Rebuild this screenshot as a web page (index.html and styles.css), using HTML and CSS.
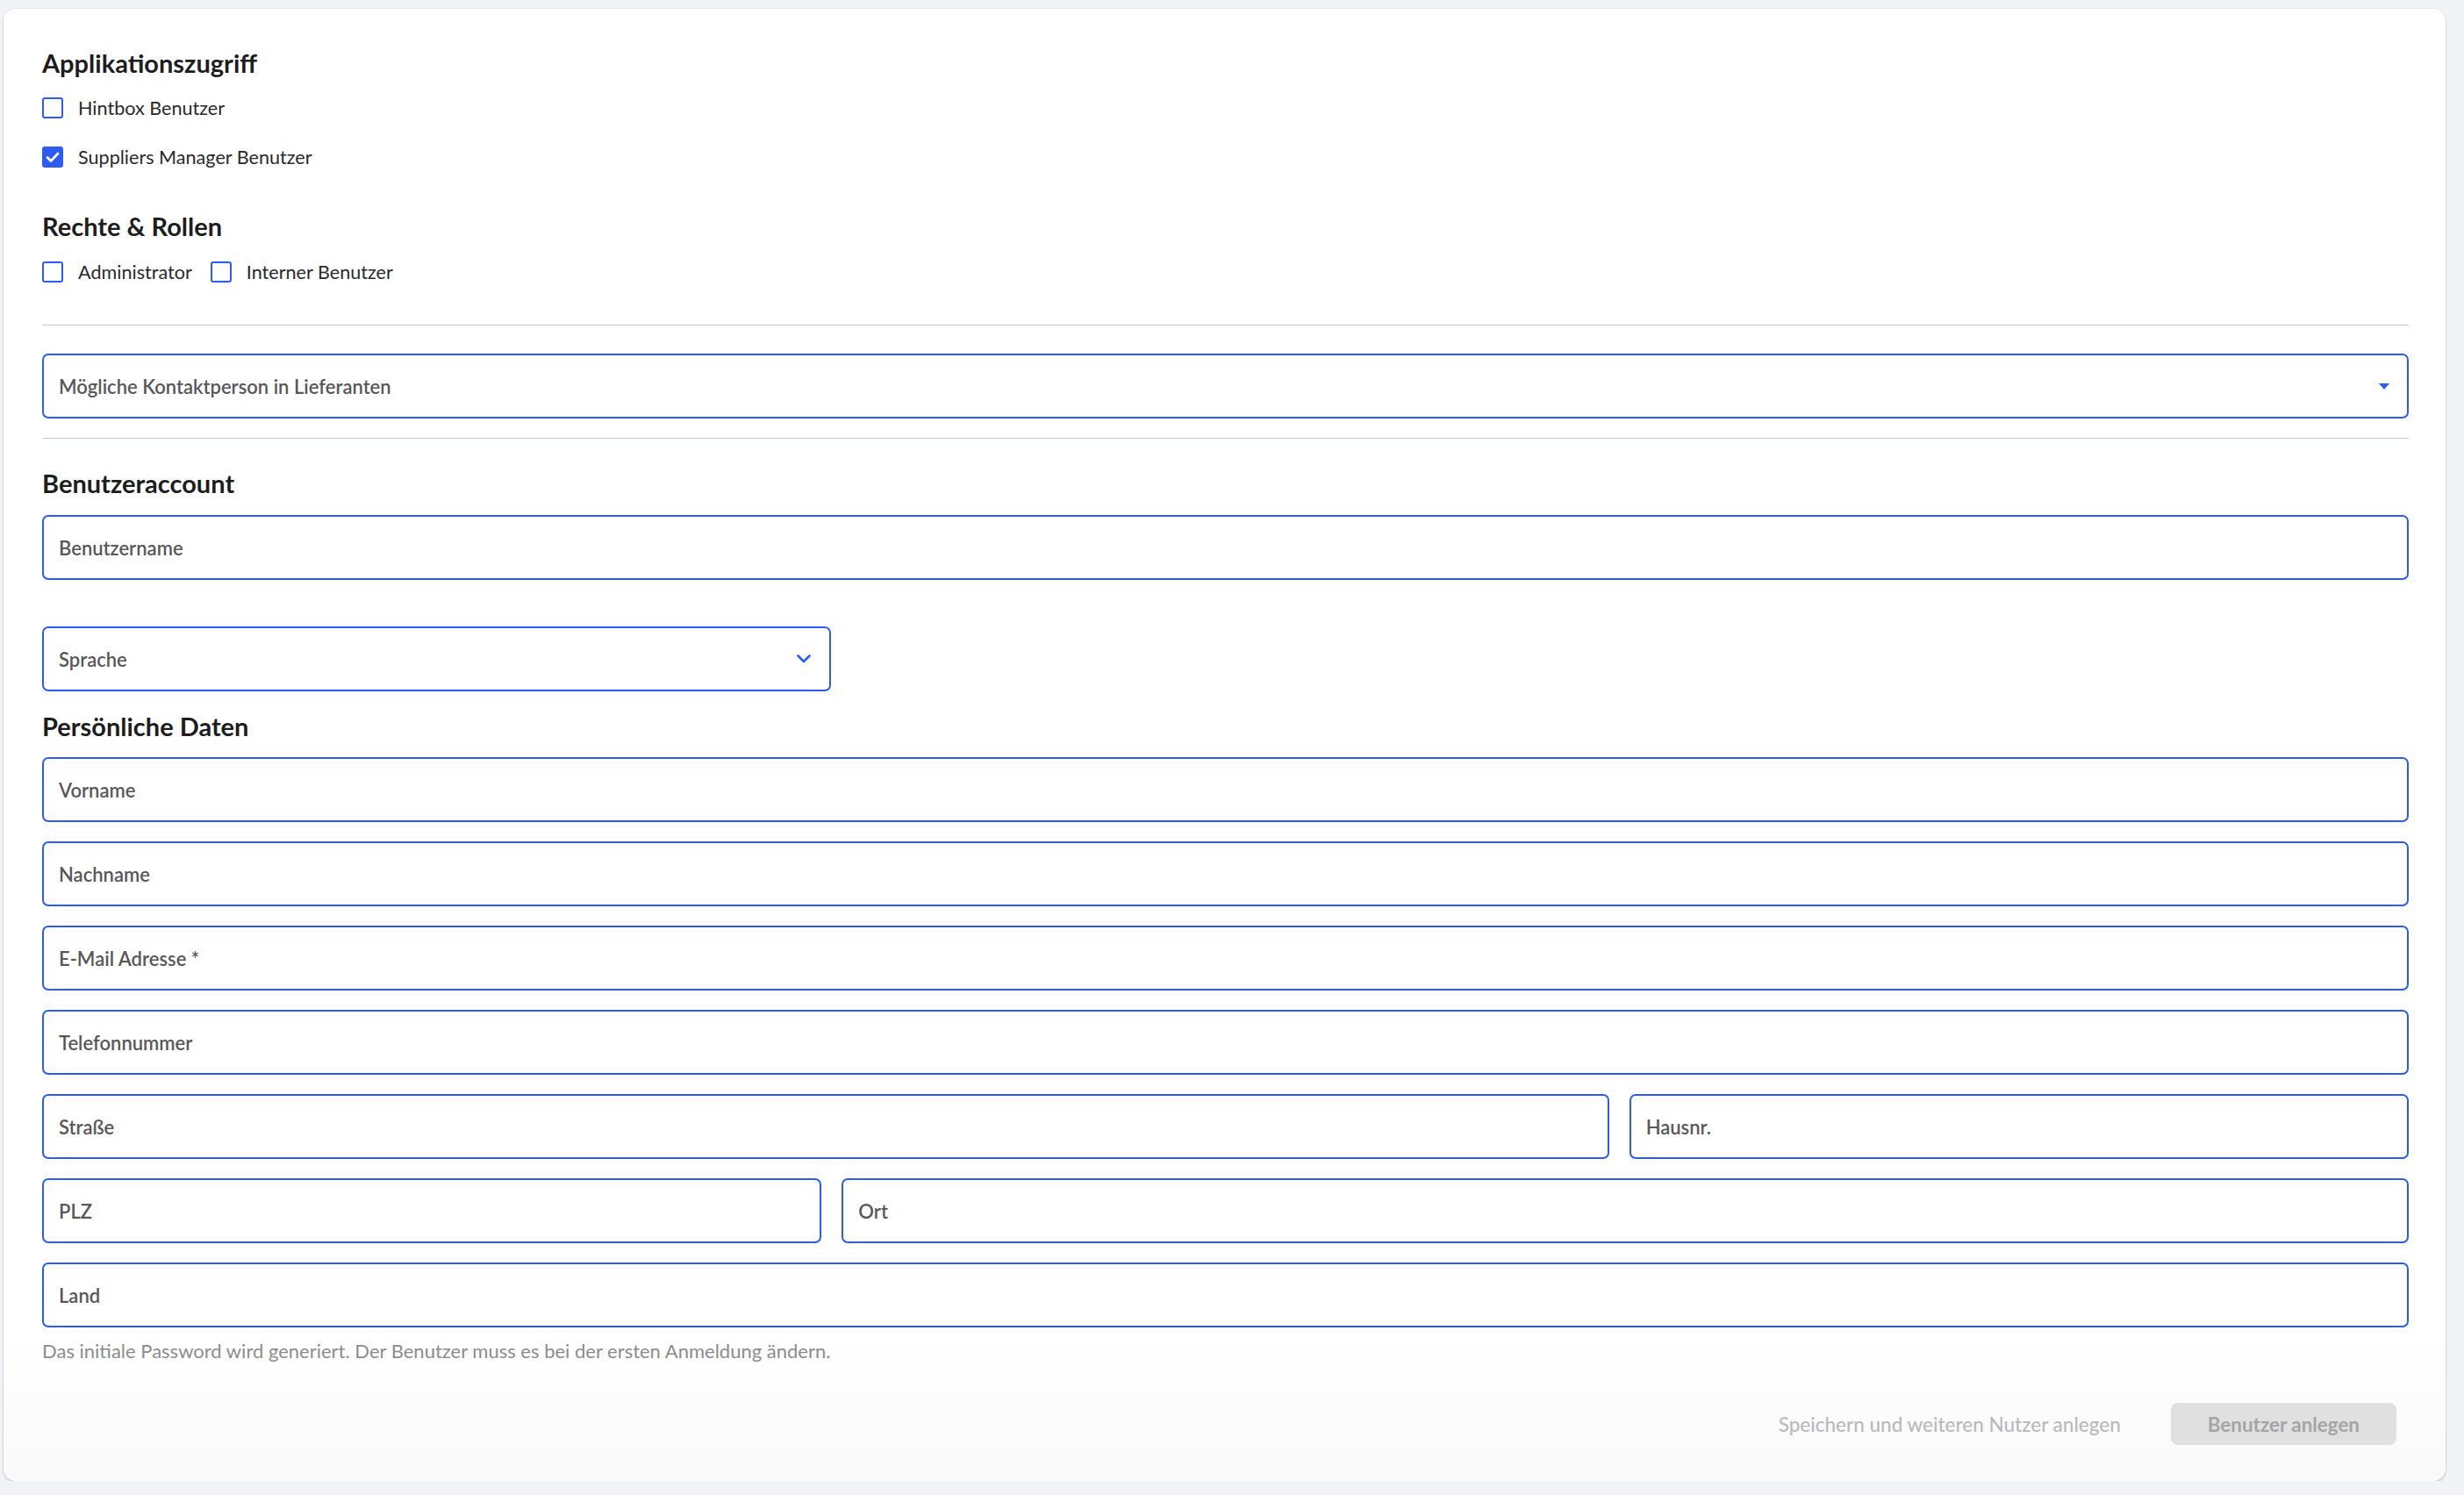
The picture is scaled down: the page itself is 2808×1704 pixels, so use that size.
FILE: index.html
```html
<!DOCTYPE html>
<html lang="de">
<head>
    <meta charset="UTF-8">
    <meta name="viewport" content="width=device-width, initial-scale=1.0">
    <title>Benutzer anlegen</title>
    <link rel="stylesheet" href="styles.css">
</head>
<body>
    <div class="card">
        <h2 class="section-title">Applikationszugriff</h2>
        <div class="check-list">
            <label class="check-row">
                <span class="checkbox"></span>
                <span class="check-label">Hintbox Benutzer</span>
            </label>
            <label class="check-row">
                <span class="checkbox checkbox-checked">
                    <svg width="16" height="13" viewBox="0 0 16 13"><polyline points="2,6.5 6,10.5 14,2" fill="none" stroke="#fff" stroke-width="2.6" stroke-linecap="round" stroke-linejoin="round"/></svg>
                </span>
                <span class="check-label">Suppliers Manager Benutzer</span>
            </label>
        </div>

        <h2 class="section-title section-roles">Rechte &amp; Rollen</h2>
        <div class="check-inline">
            <label class="check-row">
                <span class="checkbox"></span>
                <span class="check-label">Administrator</span>
            </label>
            <label class="check-row">
                <span class="checkbox"></span>
                <span class="check-label">Interner Benutzer</span>
            </label>
        </div>

        <hr class="divider divider-top">

        <div class="field field-select contact-select">
            <span>Mögliche Kontaktperson in Lieferanten</span>
            <svg width="12" height="7" viewBox="0 0 12 7"><path d="M0 0h12L6 7z" fill="#2c5cf2"/></svg>
        </div>

        <hr class="divider divider-bottom">

        <h2 class="section-title section-account">Benutzeraccount</h2>
        <div class="field account-name">Benutzername</div>
        <div class="field field-select field-third language-select">
            <span>Sprache</span>
            <svg width="16" height="10" viewBox="0 0 16 10"><polyline points="1.5,1.5 8,8 14.5,1.5" fill="none" stroke="#2c5cf2" stroke-width="2.6" stroke-linecap="round" stroke-linejoin="round"/></svg>
        </div>

        <h2 class="section-title section-personal">Persönliche Daten</h2>
        <div class="field-list">
            <div class="field">Vorname</div>
            <div class="field">Nachname</div>
            <div class="field">E-Mail Adresse *</div>
            <div class="field">Telefonnummer</div>
            <div class="field-row field-row-street">
                <div class="field">Straße</div>
                <div class="field">Hausnr.</div>
            </div>
            <div class="field-row field-row-city">
                <div class="field">PLZ</div>
                <div class="field">Ort</div>
            </div>
            <div class="field">Land</div>
        </div>

        <p class="hint">Das initiale Password wird generiert. Der Benutzer muss es bei der ersten Anmeldung ändern.</p>

        <div class="form-actions">
            <button class="button-link">Speichern und weiteren Nutzer anlegen</button>
            <button class="button button-disabled">Benutzer anlegen</button>
        </div>
    </div>
</body>
</html>
```

FILE: styles.css
```css
* {
    margin: 0;
    padding: 0;
    box-sizing: border-box;
    font-family: Lato, "Noto Sans", sans-serif;
}
body {
    background-color: #f2f3f7;
    padding: 10px 21px 0 4px;
}
.card {
    background: linear-gradient(to bottom, #ffffff 90%, #f9f9fa);
    border-radius: 14px;
    box-shadow: 0 2px 3px rgba(0, 0, 0, 0.18), 0 0 0 1px #e8e9ee;
    padding: 44px 42px 41px 44px;
}
.section-title {
    font-size: 29px;
    line-height: 36px;
    font-weight: 700;
    color: #1d1d1f;
}
.section-roles {
    margin-top: 49px;
}
.section-account {
    margin-top: 33px;
}
.section-personal {
    margin-top: 22px;
}
.check-list {
    display: flex;
    flex-direction: column;
    gap: 32px;
    margin-top: 21px;
}
.check-inline {
    display: flex;
    gap: 21px;
    margin-top: 22px;
}
.check-row {
    display: flex;
    align-items: center;
    gap: 17px;
    height: 24px;
}
.checkbox {
    width: 24px;
    height: 24px;
    border: 2.5px solid #2c5cf2;
    border-radius: 3px;
    display: flex;
    align-items: center;
    justify-content: center;
}
.checkbox-checked {
    background-color: #2c5cf2;
}
.check-label {
    font-size: 21.6px;
    color: #2a2a2c;
}
.divider {
    border: none;
    border-top: 1.5px solid #c6cad1;
}
.divider-top {
    margin-top: 48px;
}
.divider-bottom {
    margin-top: 22px;
}
.contact-select {
    margin-top: 32px;
}
.field {
    height: 74px;
    border: 2px solid #2c5cf2;
    border-radius: 7px;
    padding: 0 20px 0 17px;
    display: flex;
    align-items: center;
    font-size: 22px;
    font-weight: 600;
    color: #58585a;
}
.field-select {
    justify-content: space-between;
}
.contact-select {
    padding-right: 20px;
}
.account-name {
    margin-top: 18px;
}
.field-third {
    width: 33.33%;
}
.language-select {
    margin-top: 53px;
    padding-right: 21px;
}
.field-list {
    display: flex;
    flex-direction: column;
    gap: 22px;
    margin-top: 17px;
}
.field-row {
    display: grid;
    gap: 23px;
}
.field-row-street {
    grid-template-columns: 2.01fr 1fr;
}
.field-row-city {
    grid-template-columns: 1fr 2.01fr;
}
.hint {
    margin-top: 13px;
    font-size: 22px;
    line-height: 28px;
    color: #8c8c8e;
}
.form-actions {
    display: flex;
    justify-content: flex-end;
    align-items: center;
    gap: 57px;
    margin-top: 45px;
    padding-right: 14px;
}
.button-link {
    background: none;
    border: none;
    font-size: 22.5px;
    font-weight: 500;
    color: #b9b9bb;
    cursor: pointer;
}
.button {
    height: 48px;
    padding: 0 42px;
    border: none;
    border-radius: 8px;
    font-size: 22.4px;
    font-weight: 700;
    cursor: pointer;
}
.button-disabled {
    background-color: #e0e0e0;
    color: #a5a5a5;
    cursor: not-allowed;
}
```
